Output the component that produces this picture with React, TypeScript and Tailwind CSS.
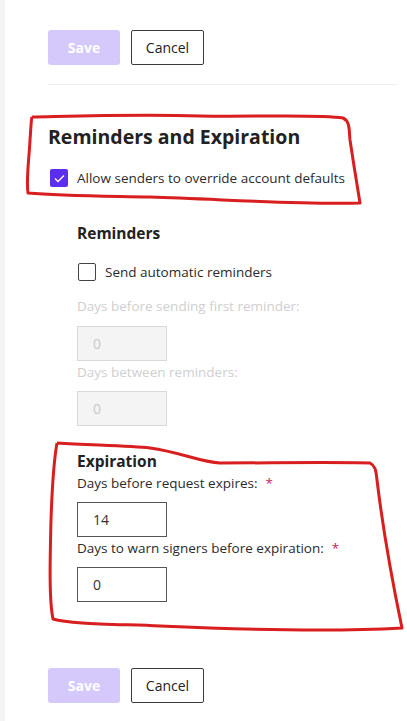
import React from "react";

const font = { fontFamily: "'Open Sans', 'Liberation Sans', sans-serif" };

function Buttons() {
  return (
    <div className="flex gap-[11px]">
      <button className="h-[35px] w-[72px] rounded-[3px] bg-[#d5c8fb] text-[14px] font-bold text-white">
        Save
      </button>
      <button className="h-[35px] w-[73px] rounded-[2px] border border-[#3a3a3a] bg-white text-[14px] text-[#222]">
        Cancel
      </button>
    </div>
  );
}

function NumberField({ value, disabled }: { value: string; disabled?: boolean }) {
  return (
    <div
      className={`flex h-[35px] w-[90px] items-center pl-[15px] text-[14px] ${
        disabled
          ? "border border-[#d9d9d9] bg-[#f4f4f4] text-[#c8c8c8]"
          : "border border-[#555] bg-white text-[#333]"
      }`}
    >
      {value}
    </div>
  );
}

function Required() {
  return <span className="ml-[8px] text-[#c8195e]">*</span>;
}

export default function App() {
  return (
    <div className="relative flex min-h-[721px] bg-white text-[#2b2b2b]" style={font}>
      <div className="w-[5px] shrink-0 bg-[#f4f4f4]" />
      <div className="flex-1 pl-[43px] pr-[12px] pt-[30px]">
        <Buttons />
        <div className="mt-[19px] border-t border-[#eeeeee]" />

        <h2 className="mt-[38px] text-[19.5px] font-bold leading-[28px] text-[#222]">
          Reminders and Expiration
        </h2>
        <label className="mt-[17px] flex items-center gap-[9px] pl-[2px]">
          <span className="flex h-[18px] w-[18px] items-center justify-center rounded-[2px] bg-[#5a2df0]">
            <svg width="11" height="9" viewBox="0 0 11 9" fill="none">
              <path d="M1 4.5 L4 7.5 L10 1.5" stroke="white" strokeWidth="1.3" />
            </svg>
          </span>
          <span className="text-[13.5px]">Allow senders to override account defaults</span>
        </label>

        <div className="pl-[29px]">
          <h3 className="mt-[34px] text-[15.5px] font-bold leading-[22px] text-[#222]">Reminders</h3>
          <label className="mt-[18px] flex items-center gap-[9px] pl-[1px]">
            <span className="h-[18px] w-[18px] rounded-[2px] border border-[#444] bg-white" />
            <span className="text-[13.5px]">Send automatic reminders</span>
          </label>

          <p className="mt-[13px] text-[13.5px] leading-[20px] text-[#cfcfcf]">
            Days before sending first reminder:
          </p>
          <div className="mt-[10px]">
            <NumberField value="0" disabled />
          </div>
          <p className="mt-[1px] text-[13.5px] leading-[20px] text-[#cfcfcf]">Days between reminders:</p>
          <div className="mt-[9px]">
            <NumberField value="0" disabled />
          </div>

          <h3 className="mt-[24px] text-[15.5px] font-bold leading-[22px] text-[#222]">Expiration</h3>
          <p className="mt-[1px] text-[13.5px] leading-[20px]">
            Days before request expires:
            <Required />
          </p>
          <div className="mt-[9px]">
            <NumberField value="14" />
          </div>
          <p className="mt-[1px] text-[13.5px] leading-[20px]">
            Days to warn signers before expiration:
            <Required />
          </p>
          <div className="mt-[9px]">
            <NumberField value="0" />
          </div>
        </div>

        <div className="mt-[66px]">
          <Buttons />
        </div>
      </div>

      <svg className="pointer-events-none absolute left-0 top-0" width="407" height="721" fill="none">
        <path
          d="M32 117 C 80 116, 140 114, 200 116 C 260 117, 320 114, 343 118 C 350 121, 349 130, 350 140 C 353 160, 357 185, 360 203 C 300 205, 220 199, 150 197 C 100 196, 60 196, 28 193 C 26 180, 29 160, 30 140 C 31 128, 31 120, 32 117"
          stroke="#d81e1e"
          strokeWidth="3"
          strokeLinejoin="round"
        />
        <path
          d="M57 443 C 90 445, 130 446, 150 448 C 180 452, 200 462, 220 463 C 270 463, 330 462, 370 463 C 376 466, 376 472, 377 480 C 383 530, 392 580, 402 628 C 330 632, 250 630, 160 626 C 110 624, 70 624, 53 619 C 49 600, 50 560, 51 520 C 52 490, 54 460, 57 443"
          stroke="#d81e1e"
          strokeWidth="3"
          strokeLinejoin="round"
        />
      </svg>
    </div>
  );
}
